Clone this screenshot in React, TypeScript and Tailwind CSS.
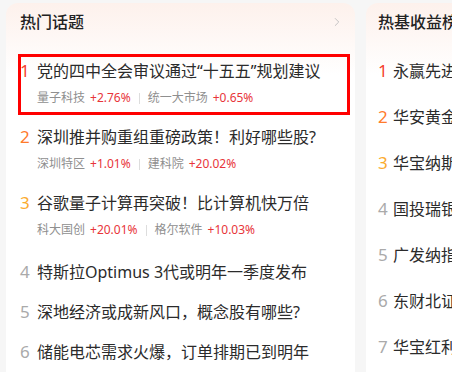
import { ChevronRight } from "lucide-react"

type Tag = { name: string; pct: string }
type Topic = { title: string; tags?: Tag[] }

const topics: Topic[] = [
  {
    title: "党的四中全会审议通过“十五五”规划建议",
    tags: [
      { name: "量子科技", pct: "+2.76%" },
      { name: "统一大市场", pct: "+0.65%" },
    ],
  },
  {
    title: "深圳推并购重组重磅政策！利好哪些股?",
    tags: [
      { name: "深圳特区", pct: "+1.01%" },
      { name: "建科院", pct: "+20.02%" },
    ],
  },
  {
    title: "谷歌量子计算再突破！比计算机快万倍",
    tags: [
      { name: "科大国创", pct: "+20.01%" },
      { name: "格尔软件", pct: "+10.03%" },
    ],
  },
  { title: "特斯拉Optimus 3代或明年一季度发布" },
  { title: "深地经济或成新风口，概念股有哪些?" },
  { title: "储能电芯需求火爆，订单排期已到明年" },
]

const funds = [
  "永赢先进制造智选混合",
  "华安黄金易ETF联接",
  "华宝纳斯达克精选",
  "国投瑞银白银期货",
  "广发纳指100ETF",
  "东财北证50指数",
  "华宝红利精选混合",
]

const rankColor = ["text-[#f5402e]", "text-[#ff7b2c]", "text-[#fbab2e]"]

function rank(i: number) {
  return rankColor[i] ?? "text-[#aaaaaa]"
}

export default function App() {
  return (
    <div
      className="w-[471px] h-[372px] bg-white overflow-hidden flex"
      style={{ fontFamily: '"Noto Sans", "Noto Sans CJK SC", sans-serif' }}
    >
      <div className="w-[452px] shrink-0 h-full bg-[#f6f6f6] flex gap-[11px] pl-[6px] pt-[3px] overflow-hidden">
        {/* 热门话题 */}
        <div className="w-[349px] shrink-0 rounded-t-[12px] bg-[linear-gradient(180deg,#fdf1ec_0px,#ffffff_72px)] pl-[14px] pr-[7px]">
          <div className="h-[31px] pt-[7px] flex items-center justify-between">
            <span className="text-[16px] leading-[24px] font-medium text-[#222]">热门话题</span>
            <ChevronRight className="w-[14px] h-[14px] text-[#bbbbbb] mr-[4px]" strokeWidth={1.5} />
          </div>
          <div className="mt-[16px]">
            {topics.map((t, i) => (
              <div key={i} className={t.tags ? "relative py-[9px]" : "relative pt-[12px] pb-[4px]"}>
                {i === 0 && (
                  <div className="absolute left-[-2px] right-[-2px] top-[4px] bottom-[1px] border-[3px] border-[#ff0000]" />
                )}
                <div className="flex items-center h-[24px]">
                  <span className={`w-[17px] shrink-0 text-[17px] leading-[24px] ${rank(i)}`}>
                    {i + 1}
                  </span>
                  <span className="text-[16px] leading-[24px] text-[#2b2b2b] whitespace-nowrap">{t.title}</span>
                </div>
                {t.tags && (
                  <div className="flex items-center h-[18px] mt-[6px] pl-[17px] text-[12px] leading-[18px]">
                    {t.tags.map((g, j) => (
                      <div key={j} className="flex items-center">
                        {j > 0 && <span className="w-px h-[11px] bg-[#dddddd] mx-[8px]" />}
                        <span className="text-[#8f8f8f]">{g.name}</span>
                        <span className="ml-[5px] text-[#e8353a]">{g.pct}</span>
                      </div>
                    ))}
                  </div>
                )}
              </div>
            ))}
          </div>
        </div>

        {/* 热基收益榜 */}
        <div className="w-[86px] shrink-0 overflow-hidden rounded-tl-[12px] bg-[linear-gradient(180deg,#fdf1ec_0px,#ffffff_72px)] pl-[12px]">
          <div className="h-[31px] pt-[7px] flex items-center">
            <span className="text-[16px] leading-[24px] font-medium text-[#222] whitespace-nowrap">热基收益榜</span>
          </div>
          <div className="mt-[14px]">
            {funds.map((f, i) => (
              <div key={i} className="flex items-center h-[46px]">
                <span className={`w-[15px] shrink-0 text-[17px] leading-[24px] ${rank(i)}`}>
                  {i + 1}
                </span>
                <span className="text-[16px] leading-[24px] text-[#2b2b2b] whitespace-nowrap">{f}</span>
              </div>
            ))}
          </div>
        </div>
      </div>
    </div>
  )
}
